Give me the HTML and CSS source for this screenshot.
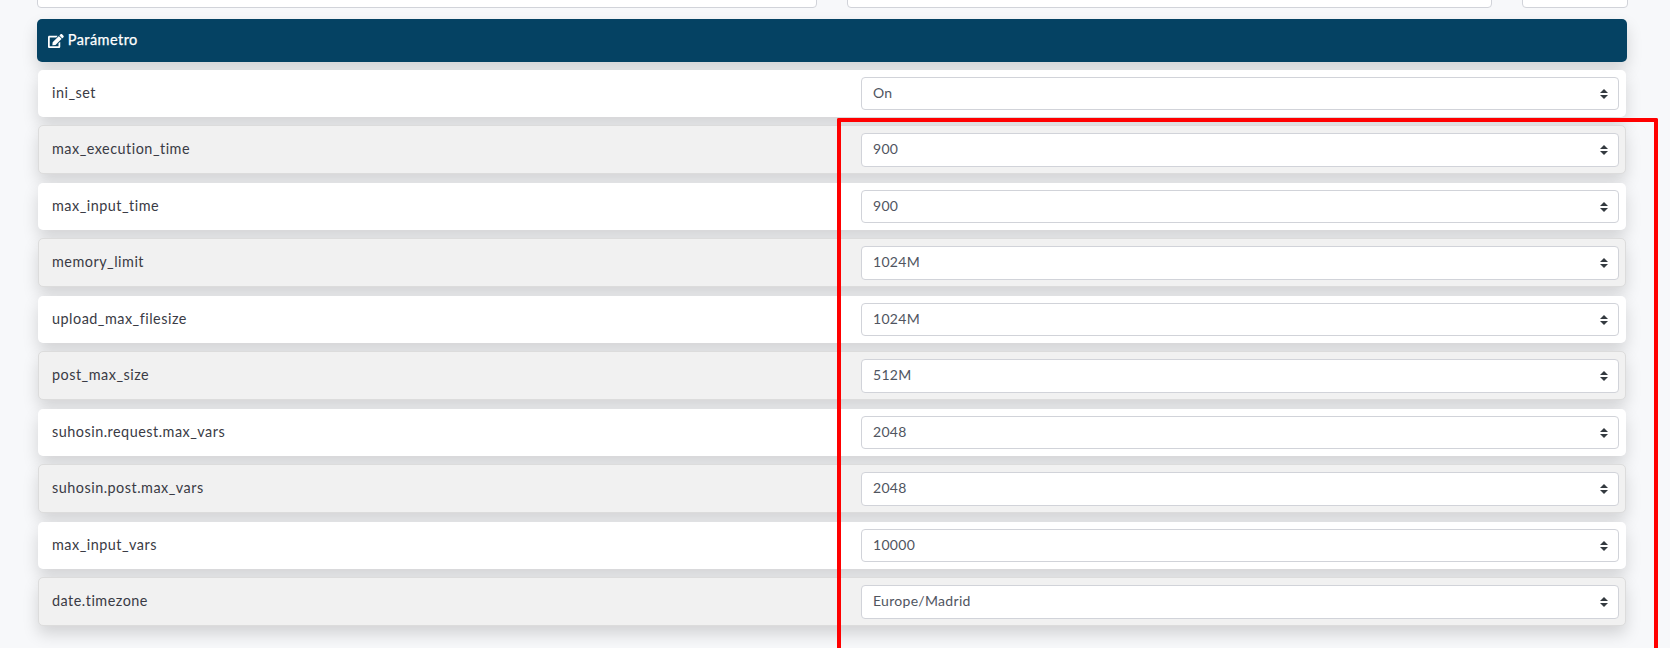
FILE: index.html
```html
<!DOCTYPE html>
<html lang="es">
<head>
<meta charset="utf-8">
<title>Parámetro</title>
<link rel="stylesheet" href="styles.css">
</head>
<body>
<main class="page">
  <div class="top-fields">
    <div class="top-field top-field-a"></div>
    <div class="top-field top-field-b"></div>
    <div class="top-field top-field-c"></div>
  </div>
  <h2 class="panel-head">
    <svg class="edit-icon" viewBox="0 0 576 512" aria-hidden="true"><path fill="currentColor" d="M402.6 83.2l90.2 90.2c3.8 3.8 3.8 10 0 13.8L274.4 405.6l-92.8 10.3c-12.4 1.4-22.9-9.1-21.5-21.5l10.3-92.8L388.8 83.2c3.8-3.8 10-3.8 13.8 0zm162-22.9l-48.8-48.8c-15.2-15.2-39.9-15.2-55.2 0l-35.4 35.4c-3.8 3.8-3.8 10 0 13.8l90.2 90.2c3.8 3.8 10 3.8 13.8 0l35.4-35.4c15.2-15.3 15.2-40 0-55.2zM384 346.2V448H64V128h229.8c3.2 0 6.2-1.3 8.5-3.5l40-40c7.6-7.6 2.2-20.5-8.5-20.5H48C21.5 64 0 85.5 0 112v352c0 26.5 21.5 48 48 48h352c26.5 0 48-21.5 48-48V306.2c0-10.7-12.9-16-20.5-8.5l-40 40c-2.2 2.3-3.5 5.3-3.5 8.5z"/></svg>
    <span class="head-text">Parámetro</span>
  </h2>
  <ul class="rows">
    <li class="row"><span class="name">ini_set</span><div class="select"><span class="value">On</span><svg class="arrows" viewBox="0 0 4 5"><path fill="currentColor" d="M2 0L0 2h4zm0 5L0 3h4z"/></svg></div></li>
    <li class="row"><span class="name">max_execution_time</span><div class="select"><span class="value">900</span><svg class="arrows" viewBox="0 0 4 5"><path fill="currentColor" d="M2 0L0 2h4zm0 5L0 3h4z"/></svg></div></li>
    <li class="row"><span class="name">max_input_time</span><div class="select"><span class="value">900</span><svg class="arrows" viewBox="0 0 4 5"><path fill="currentColor" d="M2 0L0 2h4zm0 5L0 3h4z"/></svg></div></li>
    <li class="row"><span class="name">memory_limit</span><div class="select"><span class="value">1024M</span><svg class="arrows" viewBox="0 0 4 5"><path fill="currentColor" d="M2 0L0 2h4zm0 5L0 3h4z"/></svg></div></li>
    <li class="row"><span class="name">upload_max_filesize</span><div class="select"><span class="value">1024M</span><svg class="arrows" viewBox="0 0 4 5"><path fill="currentColor" d="M2 0L0 2h4zm0 5L0 3h4z"/></svg></div></li>
    <li class="row"><span class="name">post_max_size</span><div class="select"><span class="value">512M</span><svg class="arrows" viewBox="0 0 4 5"><path fill="currentColor" d="M2 0L0 2h4zm0 5L0 3h4z"/></svg></div></li>
    <li class="row"><span class="name">suhosin.request.max_vars</span><div class="select"><span class="value">2048</span><svg class="arrows" viewBox="0 0 4 5"><path fill="currentColor" d="M2 0L0 2h4zm0 5L0 3h4z"/></svg></div></li>
    <li class="row"><span class="name">suhosin.post.max_vars</span><div class="select"><span class="value">2048</span><svg class="arrows" viewBox="0 0 4 5"><path fill="currentColor" d="M2 0L0 2h4zm0 5L0 3h4z"/></svg></div></li>
    <li class="row"><span class="name">max_input_vars</span><div class="select"><span class="value">10000</span><svg class="arrows" viewBox="0 0 4 5"><path fill="currentColor" d="M2 0L0 2h4zm0 5L0 3h4z"/></svg></div></li>
    <li class="row"><span class="name">date.timezone</span><div class="select"><span class="value">Europe/Madrid</span><svg class="arrows" viewBox="0 0 4 5"><path fill="currentColor" d="M2 0L0 2h4zm0 5L0 3h4z"/></svg></div></li>
  </ul>
</main>
<div class="red-box"></div>
</body>
</html>
```

FILE: styles.css
```css
* { box-sizing: border-box; }
html, body { margin: 0; height: 648px; overflow: hidden; }
body {
  position: relative;
  background: #f7f8fa;
  font-family: "Lato", "Noto Sans", sans-serif;
  font-size: 14px;
  color: #3a3b45;
}
.page { padding: 0 43px 0 37px; }
.top-fields { display: flex; gap: 30.5px; height: 8px; align-items: flex-end; margin-bottom: 11px; }
.top-field {
  height: 34px;
  flex: none;
  background: #fff;
  border: 1px solid #d1d3d9;
  border-radius: 4px;
}
.top-field-a { width: 779.5px; }
.top-field-b { width: 644.5px; }
.top-field-c { width: 105.5px; }
.panel-head {
  display: flex;
  align-items: center;
  gap: 4px;
  height: 43px;
  margin: 0 0 8px;
  padding: 0 11px 0 11px;
  background: #054263;
  color: #fff;
  border-radius: 5px;
  font-size: 14.5px;
  font-weight: 400;
  letter-spacing: 0.45px;
  -webkit-text-stroke: 0.25px #fff;
  box-shadow: 0 8px 16px rgba(0,0,0,.15);
}
.head-text { padding-bottom: 2px; }
.edit-icon { width: 15.75px; height: 14px; flex: none; }
.rows { list-style: none; margin: 0; padding: 0 1px; }
.row {
  display: grid;
  grid-template-columns: 1fr 758px;
  align-items: center;
  height: 47px;
  margin-bottom: 8.25px;
  padding: 0 7px 0 14px;
  background: #fff;
  border-radius: 5px;
  box-shadow: 0 8px 16px rgba(0,0,0,.15);
}
.row:nth-child(even) {
  height: 49px;
  margin-bottom: 8.75px;
  background: #f1f1f1;
  border: 1px solid #dcdcdc;
  padding: 0 6px 0 13px;
}
.name { font-size: 14.4px; letter-spacing: 0.5px; padding-bottom: 2px; }
.value { padding-bottom: 2px; }
.select {
  display: flex;
  align-items: center;
  justify-content: space-between;
  height: 33.5px;
  padding: 0 10px 0 11px;
  background: #fff;
  border: 1px solid #d1d3d9;
  border-radius: 4px;
  color: #50555f;
  letter-spacing: 0.3px;
}
.arrows { width: 8px; height: 10px; color: #343a40; flex: none; }
.red-box {
  position: absolute;
  left: 837px;
  top: 118px;
  width: 821px;
  height: 530px;
  border: 4px solid #f00;
  border-bottom: 0;
  border-radius: 2px 2px 0 0;
}
```
